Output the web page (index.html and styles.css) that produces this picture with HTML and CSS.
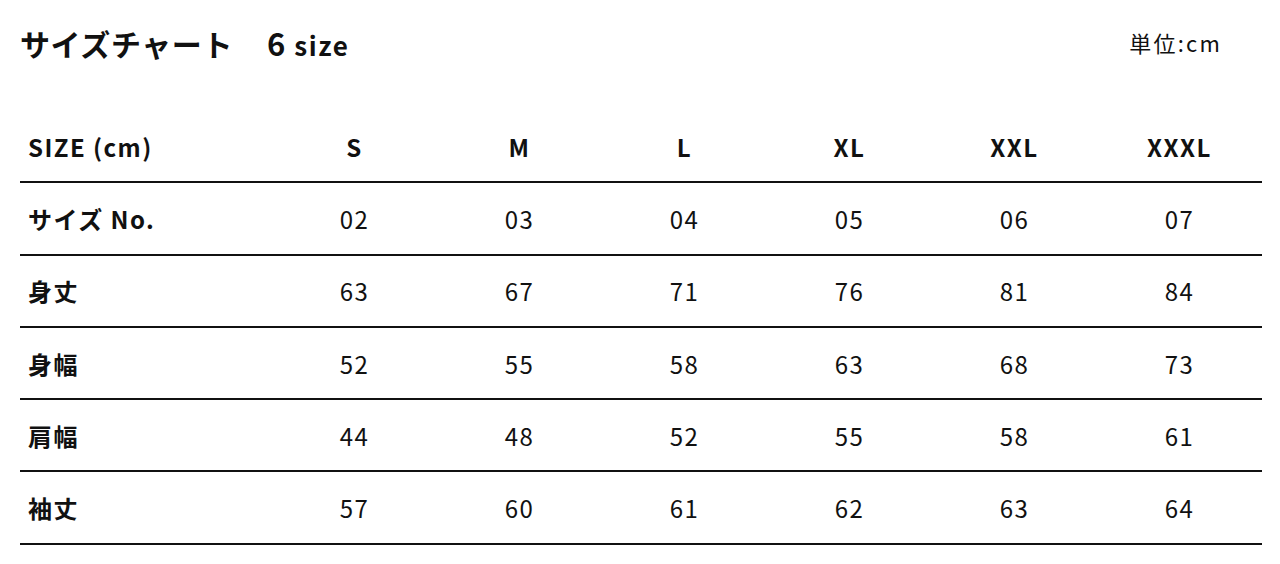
FILE: index.html
```html
<!DOCTYPE html>
<html lang="ja">
<head>
<meta charset="utf-8">
<link rel="stylesheet" href="styles.css">
</head>
<body>
<div class="page">
  <div class="head">
    <h1 class="title">サイズチャート<span class="count"><span class="num">6</span> size</span></h1>
    <div class="unit">単位:cm</div>
  </div>
  <table class="chart">
    <thead>
      <tr><th class="label">SIZE (cm)</th><th>S</th><th>M</th><th>L</th><th>XL</th><th>XXL</th><th>XXXL</th></tr>
    </thead>
    <tbody>
      <tr><th class="label">サイズ No.</th><td>02</td><td>03</td><td>04</td><td>05</td><td>06</td><td>07</td></tr>
      <tr><th class="label">身丈</th><td>63</td><td>67</td><td>71</td><td>76</td><td>81</td><td>84</td></tr>
      <tr><th class="label">身幅</th><td>52</td><td>55</td><td>58</td><td>63</td><td>68</td><td>73</td></tr>
      <tr><th class="label">肩幅</th><td>44</td><td>48</td><td>52</td><td>55</td><td>58</td><td>61</td></tr>
      <tr><th class="label">袖丈</th><td>57</td><td>60</td><td>61</td><td>62</td><td>63</td><td>64</td></tr>
    </tbody>
  </table>
</div>
</body>
</html>
```

FILE: styles.css
```css
html, body {
  margin: 0;
  padding: 0;
  background: #fff;
}
body {
  font-family: "Noto Sans CJK JP", "Noto Sans", sans-serif;
  color: #111;
}
.page {
  padding: 0 18px 0 20px;
}
.head {
  display: flex;
  justify-content: space-between;
  align-items: center;
  height: 84px;
}
.title {
  margin: 0;
  font-size: 30px;
  font-weight: 700;
  line-height: 1;
  letter-spacing: 0.02em;
}
.count {
  margin-left: 34px;
  font-size: 26px;
  letter-spacing: 0.06em;
}
.count .num {
  font-size: 31px;
}
.unit {
  font-size: 22px;
  letter-spacing: 0.1em;
  margin-right: 40px;
}
.chart {
  width: 100%;
  border-collapse: collapse;
  margin-top: 27px;
  table-layout: fixed;
}
.chart th, .chart td {
  height: 70.3px;
  padding: 0;
  text-align: center;
  font-size: 24px;
  letter-spacing: 0.06em;
  border-bottom: 2px solid #111;
  width: 165px;
}
.chart th {
  font-weight: 700;
}
.chart td {
  font-weight: 400;
}
.chart .label {
  width: 252px;
  text-align: left;
  padding-left: 8px;
  box-sizing: border-box;
}
```
